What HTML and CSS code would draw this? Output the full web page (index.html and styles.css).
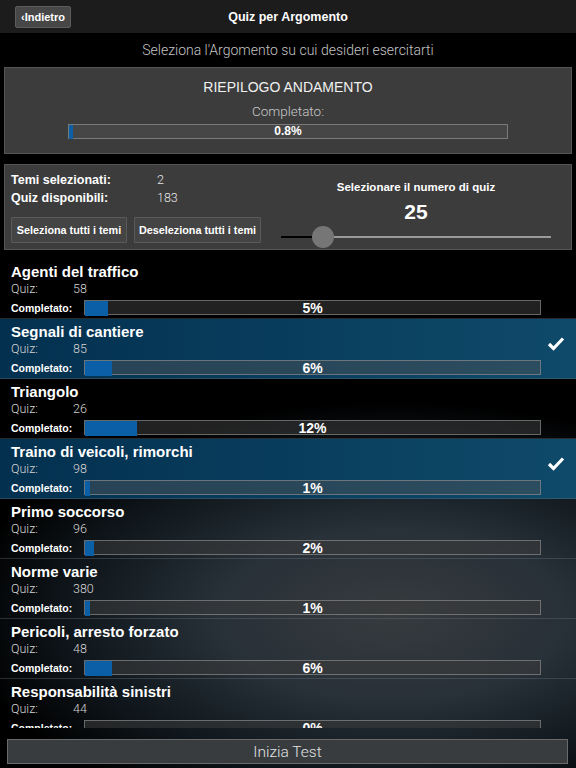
FILE: index.html
```html
<!DOCTYPE html>
<html lang="it">
<head>
    <meta charset="UTF-8">
    <meta name="viewport" content="width=device-width, initial-scale=1.0">
    <title>Quiz per Argomento</title>
    <link rel="stylesheet" href="styles.css">
</head>
<body>
    <div class="header">
        <button class="back-btn">&lsaquo;Indietro</button>
        <div class="header-title">Quiz per Argomento</div>
    </div>

    <div class="subtitle">Seleziona l'Argomento su cui desideri esercitarti</div>

    <div class="panel summary">
        <div class="summary-title">RIEPILOGO ANDAMENTO</div>
        <div class="summary-label">Completato:</div>
        <div class="bar bar-summary">
            <div class="bar-fill" style="width: 0.8%"></div>
            <div class="bar-text">0.8%</div>
        </div>
    </div>

    <div class="panel controls">
        <div class="controls-left">
            <div class="stat"><span class="stat-label">Temi selezionati:</span><span class="stat-value">2</span></div>
            <div class="stat"><span class="stat-label">Quiz disponibili:</span><span class="stat-value">183</span></div>
            <div class="btn-row">
                <button class="small-btn">Seleziona tutti i temi</button>
                <button class="small-btn">Deseleziona tutti i temi</button>
            </div>
        </div>
        <div class="controls-right">
            <div class="count-label">Selezionare il numero di quiz</div>
            <div class="count-value">25</div>
            <div class="slider">
                <div class="slider-done"></div>
                <div class="slider-thumb"></div>
                <div class="slider-rest"></div>
            </div>
        </div>
    </div>

    <div class="bottom">
        <div class="topic-list" id="topic-list"></div>
        <div class="footer">
            <button class="start-btn">Inizia Test</button>
        </div>
    </div>

    <script>
        var topics = [
            { name: 'Agenti del traffico', quiz: 58, done: 5, selected: false },
            { name: 'Segnali di cantiere', quiz: 85, done: 6, selected: true },
            { name: 'Triangolo', quiz: 26, done: 12, selected: false },
            { name: 'Traino di veicoli, rimorchi', quiz: 98, done: 1, selected: true },
            { name: 'Primo soccorso', quiz: 96, done: 2, selected: false },
            { name: 'Norme varie', quiz: 380, done: 1, selected: false },
            { name: 'Pericoli, arresto forzato', quiz: 48, done: 6, selected: false },
            { name: 'Responsabilità sinistri', quiz: 44, done: 0, selected: false }
        ];

        var fills = { 5: 5, 6: 6, 12: 11.5, 1: 1.2, 2: 2, 0: 0 };

        function renderTopics() {
            var list = document.getElementById('topic-list');
            topics.forEach(function (t) {
                var row = document.createElement('div');
                row.className = 'topic' + (t.selected ? ' selected' : '');
                row.innerHTML =
                    '<div class="topic-info">' +
                        '<div class="topic-name">' + t.name + '</div>' +
                        '<div class="topic-quiz"><span class="quiz-label">Quiz:</span>' + t.quiz + '</div>' +
                        '<div class="topic-progress">' +
                            '<span class="progress-label">Completato:</span>' +
                            '<div class="bar">' +
                                '<div class="bar-fill" style="width: ' + fills[t.done] + '%"></div>' +
                                '<div class="bar-text">' + t.done + '%</div>' +
                            '</div>' +
                        '</div>' +
                    '</div>' +
                    '<div class="topic-check">' +
                        (t.selected ? '<svg width="18" height="15" viewBox="0 0 18 15"><polyline points="2,8 6.5,12.5 16,2.5" fill="none" stroke="#fff" stroke-width="3.2"/></svg>' : '') +
                    '</div>';
                list.appendChild(row);
            });
        }

        renderTopics();
    </script>
</body>
</html>
```

FILE: styles.css
```css
body {
    margin: 0;
    width: 576px;
    height: 768px;
    overflow: hidden;
    background-color: #000;
    font-family: 'Liberation Sans', Arial, sans-serif;
    color: #fff;
    display: flex;
    flex-direction: column;
}

button {
    font-family: inherit;
    cursor: pointer;
}

.header {
    height: 33px;
    flex-shrink: 0;
    background-color: #1c1c1c;
    display: flex;
    align-items: center;
    justify-content: center;
    position: relative;
}

.back-btn {
    position: absolute;
    left: 15px;
    top: 6px;
    width: 56px;
    height: 22px;
    padding: 0;
    background-color: #474747;
    border: 1px solid #5c5c5c;
    border-radius: 2px;
    color: #fff;
    font-size: 11px;
    font-weight: bold;
}

.header-title {
    font-size: 12.5px;
    font-weight: bold;
}

.subtitle {
    height: 34px;
    flex-shrink: 0;
    display: flex;
    align-items: center;
    justify-content: center;
    font-family: Roboto, 'Liberation Sans', sans-serif;
    font-weight: 300;
    font-size: 14px;
    color: #c4c4c4;
}

.panel {
    margin: 0 4px;
    background-color: #3c3c3c;
    border: 1px solid #555;
    flex-shrink: 0;
    box-sizing: border-box;
}

.summary {
    height: 87px;
    padding-top: 9px;
    display: flex;
    flex-direction: column;
    align-items: center;
}

.summary-title {
    font-size: 14px;
    line-height: 20px;
    color: #f0f0f0;
}

.summary-label {
    margin-top: 5px;
    font-family: Roboto, 'Liberation Sans', sans-serif;
    font-weight: 300;
    font-size: 13.5px;
    line-height: 18px;
    color: #c8c8c8;
}

.bar {
    display: grid;
    height: 15px;
    box-sizing: border-box;
    border: 1px solid rgba(150, 150, 150, 0.6);
    background-color: rgba(60, 60, 60, 0.55);
}

.bar > * {
    grid-area: 1 / 1;
}

.bar-fill {
    background-color: #0a5fa6;
    height: 100%;
}

.bar-text {
    text-align: center;
    font-weight: bold;
    font-size: 14px;
    line-height: 15px;
    color: #fff;
}

.bar-summary {
    margin-top: 4px;
    width: 440px;
    background-color: #464646;
    border-color: #7a7a7a;
}

.bar-summary .bar-text {
    font-size: 12px;
    margin-top: -1px;
}

.controls {
    margin-top: 10px;
    height: 86px;
    padding: 6px 2px 6px 6px;
    display: flex;
}

.controls-left {
    width: 252px;
}

.stat {
    display: flex;
    font-size: 12.5px;
    line-height: 18px;
}

.stat-label {
    width: 146px;
    font-weight: bold;
}

.stat-value {
    font-family: Roboto, 'Liberation Sans', sans-serif;
    font-weight: 300;
    color: #e6e6e6;
}

.btn-row {
    margin-top: 10px;
    display: flex;
    gap: 7px;
}

.small-btn {
    height: 26px;
    padding: 0;
    white-space: nowrap;
    background-color: #444;
    border: 1px solid #5a5a5a;
    border-radius: 1px;
    color: #fff;
    font-size: 10.8px;
    font-weight: bold;
}

.small-btn:first-child {
    width: 116px;
}

.small-btn:last-child {
    width: 127px;
}

.controls-right {
    flex: 1;
    display: flex;
    flex-direction: column;
    align-items: center;
    padding-top: 8px;
}

.count-label {
    font-size: 11.5px;
    font-weight: bold;
    line-height: 16px;
}

.count-value {
    margin-top: 5px;
    font-size: 21px;
    font-weight: bold;
    line-height: 24px;
}

.slider {
    margin-top: 2px;
    width: 270px;
    height: 24px;
    display: flex;
    align-items: center;
}

.slider-done {
    width: 31px;
    height: 2px;
    background-color: #000;
}

.slider-thumb {
    width: 22px;
    height: 22px;
    border-radius: 50%;
    background-color: #767676;
}

.slider-rest {
    flex: 1;
    height: 2px;
    background-color: #9a9a9a;
}

.bottom {
    flex: 1;
    margin-top: 9px;
    display: flex;
    flex-direction: column;
    background:
        radial-gradient(ellipse 75% 42% at 68% 70%, #363b3e 0%, #283038 40%, #121a20 70%, rgba(0, 0, 0, 0) 100%),
        #000;
}

.topic-list {
    height: 469px;
    overflow: hidden;
}

.topic {
    height: 60px;
    box-sizing: border-box;
    border-bottom: 1px solid rgba(110, 120, 128, 0.35);
    padding: 4px 0 0 11px;
    display: flex;
}

.topic.selected {
    background: linear-gradient(to right, #03304f, #0f4a6b);
}

.topic.selected .bar {
    background-color: rgba(70, 80, 88, 0.55);
}

.topic-info {
    width: 530px;
}

.topic-name {
    font-size: 15px;
    font-weight: bold;
    line-height: 18px;
}

.topic-quiz {
    font-family: Roboto, 'Liberation Sans', sans-serif;
    font-weight: 300;
    font-size: 12.5px;
    line-height: 16px;
    color: #d4d4d4;
}

.quiz-label {
    display: inline-block;
    width: 62px;
}

.topic-progress {
    margin-top: 3px;
    display: flex;
    align-items: center;
}

.progress-label {
    width: 73px;
    flex-shrink: 0;
    font-size: 10.5px;
    font-weight: bold;
}

.topic-progress .bar {
    flex: 1;
}

.topic-check {
    flex: 1;
    display: flex;
    justify-content: center;
    padding-top: 13px;
    padding-right: 6px;
}

.footer {
    flex: 1;
    padding: 11px 8px 4px 7px;
    display: flex;
    align-items: flex-end;
}

.start-btn {
    width: 100%;
    height: 25px;
    background-color: #383c3f;
    border: 1px solid #6a6a6a;
    color: #e2e2e2;
    font-family: Roboto, 'Liberation Sans', sans-serif;
    font-weight: 300;
    font-size: 15.5px;
    padding: 0;
}
```
